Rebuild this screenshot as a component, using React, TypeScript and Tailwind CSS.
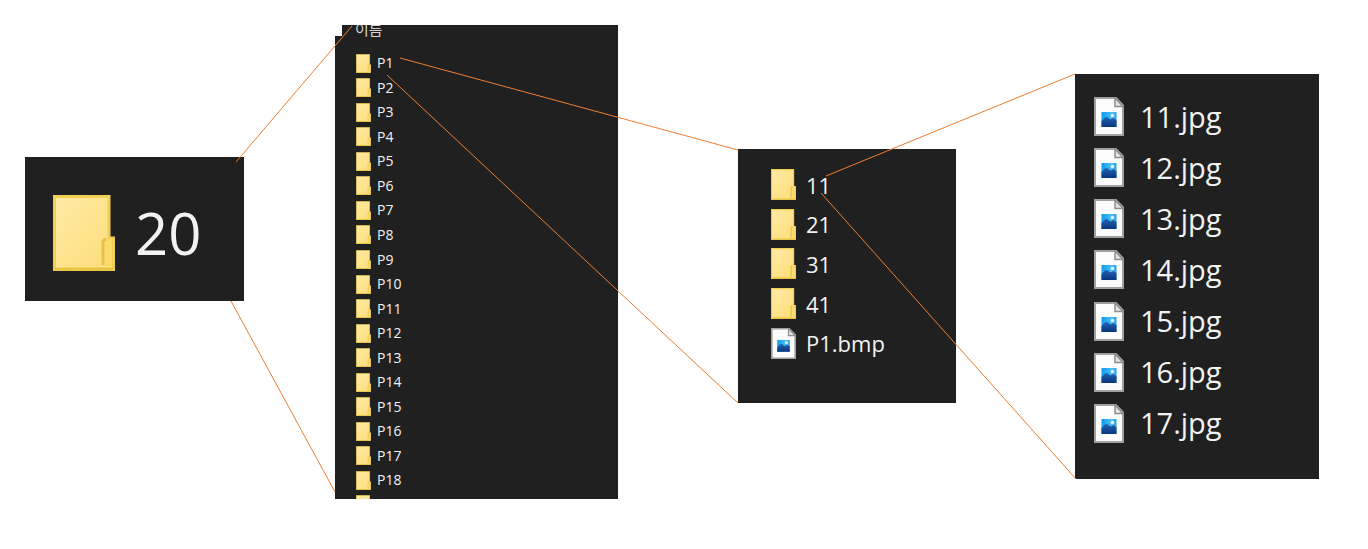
import React from "react";

function FolderIcon({ className }: { className: string }) {
  return (
    <svg viewBox="0 0 62 76" preserveAspectRatio="none" className={`shrink-0 ${className}`} aria-hidden="true">
      <defs>
        <linearGradient id="folder-face" x1="0" y1="0" x2="1" y2="1">
          <stop offset="0" stopColor="#ffeba6" />
          <stop offset="1" stopColor="#fedd78" />
        </linearGradient>
      </defs>
      <path d="M1.500 1.500H56V43H60.500V74.500H1.500Z" fill="url(#folder-face)" stroke="#f0cf52" strokeWidth="3" />
      <path d="M51 71V47L54 43.500H59V71Z" fill="#fcdb6c" />
      <path d="M50 70V46L53 43.500" fill="none" stroke="#e6c24a" strokeWidth="3" />
      <path d="M1 74H61" stroke="#e8c344" strokeWidth="3" />
    </svg>
  );
}

function ImageFileIcon({ className }: { className: string }) {
  return (
    <svg viewBox="0 0 30 39" preserveAspectRatio="none" className={`shrink-0 ${className}`} aria-hidden="true">
      <defs>
        <linearGradient id="thumb-sky" x1="0" y1="0" x2="1" y2="0">
          <stop offset="0" stopColor="#0c9ceb" />
          <stop offset="0.700" stopColor="#4fc0f5" />
          <stop offset="1" stopColor="#2a9be0" />
        </linearGradient>
        <linearGradient id="thumb-hill" x1="0" y1="0" x2="0" y2="1">
          <stop offset="0" stopColor="#2564b4" />
          <stop offset="1" stopColor="#08357c" />
        </linearGradient>
      </defs>
      <path d="M1 1H22L29 8.500V38H1Z" fill="#fcfcfc" stroke="#a0a0a0" strokeWidth="2" />
      <path d="M21 1V9.500H29Z" fill="#e4e4e4" stroke="#8e8e8e" strokeWidth="1.500" />
      <rect x="7.500" y="15" width="15" height="15" fill="url(#thumb-sky)" />
      <path d="M7.500 24L11 20.500L13 20L16.500 22.500L19 21L22.500 23V30H7.500Z" fill="url(#thumb-hill)" />
      <circle cx="18.500" cy="18.500" r="1.800" fill="#d9f3ff" />
    </svg>
  );
}

const pages = Array.from({ length: 18 }, (_, i) => `P${i + 1}`);
const groups = ["11", "21", "31", "41"];
const images = ["11.jpg", "12.jpg", "13.jpg", "14.jpg", "15.jpg", "16.jpg", "17.jpg"];

const connectors = [
  [236, 162, 352, 26],
  [231, 301, 335, 492],
  [400, 58, 738, 150],
  [387, 75, 738, 403],
  [826, 176, 1075, 74],
  [821, 193, 1076, 479],
];

export default function App() {
  return (
    <main className="relative min-h-screen w-full overflow-x-auto bg-white font-['Open_Sans','Noto_Sans_CJK_KR',sans-serif] text-[#f2f2f2]">
      <section className="absolute left-[25px] top-[157px] flex h-36 w-[219px] items-center gap-5 bg-[#202020] pl-7 pt-2">
        <FolderIcon className="h-[76px] w-[62px]" />
        <span className="text-[58px] font-medium leading-none">20</span>
      </section>

      <section className="absolute left-[335px] top-[25px] h-[474px] w-[283px] overflow-hidden bg-[#202020]">
        <div className="flex h-[26px] items-start">
          <span className="h-[11px] w-[7px] bg-white" />
          <h2 className="-mt-1 pl-[13px] text-[15px] leading-4 text-[#d4d4d4]">이름</h2>
        </div>
        <ul className="flex h-[466px] flex-col pl-[21px]">
          {pages.map((name) => (
            <li key={name} className="flex flex-1 items-center gap-1.5 text-[14px] leading-5">
              <FolderIcon className="h-[19px] w-[15px]" />
              {name}
            </li>
          ))}
          <li className="flex flex-1 items-center">
            <FolderIcon className="h-[19px] w-[15px]" />
          </li>
        </ul>
      </section>

      <section className="absolute left-[738px] top-[149px] h-[254px] w-[218px] bg-[#202020] pt-4">
        <ul className="flex h-[198px] flex-col pl-[33px] text-[22px] leading-8">
          {groups.map((name) => (
            <li key={name} className="flex flex-1 items-center gap-2.5">
              <FolderIcon className="h-[31px] w-[25px]" />
              {name}
            </li>
          ))}
          <li className="flex flex-1 items-center gap-2.5">
            <ImageFileIcon className="h-[31px] w-[25px]" />
            P1.bmp
          </li>
        </ul>
      </section>

      <section className="absolute left-[1075px] top-[74px] h-[405px] w-[244px] bg-[#202020] pt-[17px]">
        <ul className="flex h-[358px] flex-col pl-[19px] text-[29px] leading-10">
          {images.map((name) => (
            <li key={name} className="flex flex-1 items-center gap-4">
              <ImageFileIcon className="h-[39px] w-[30px]" />
              {name}
            </li>
          ))}
        </ul>
      </section>

      <svg className="pointer-events-none absolute inset-0 size-full overflow-visible" aria-hidden="true">
        {connectors.map(([x1, y1, x2, y2]) => (
          <line key={`${x1}-${y1}`} x1={x1} y1={y1} x2={x2} y2={y2} stroke="#ed7d31" strokeWidth="1" />
        ))}
      </svg>
    </main>
  );
}
